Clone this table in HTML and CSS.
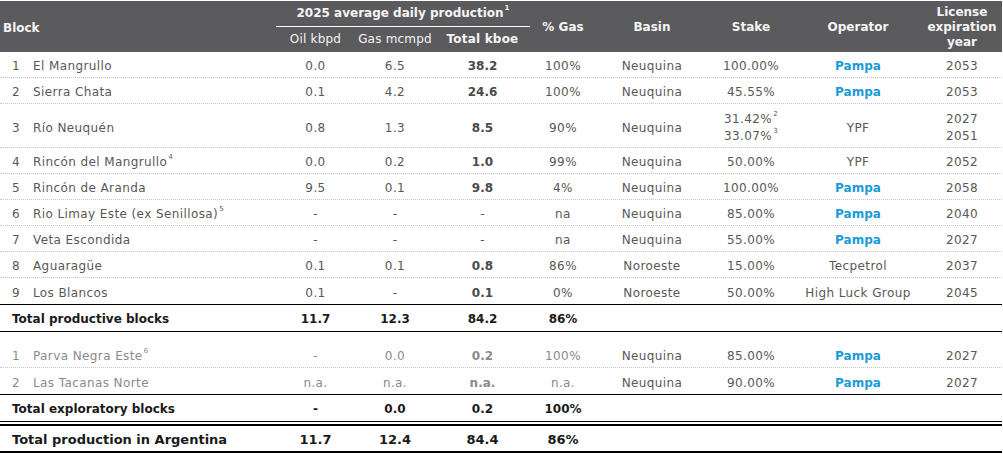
FILE: index.html
```html
<!DOCTYPE html>
<html>
<head>
<meta charset="utf-8">
<link rel="stylesheet" href="styles.css">
</head>
<body>
<div class="table">
  <div class="head">
    <div class="h-block">Block</div>
    <div class="h-group">2025 average daily production<sup>1</sup></div>
    <div class="h-sub c2">Oil kbpd</div>
    <div class="h-sub c3">Gas mcmpd</div>
    <div class="h-sub c4 b">Total kboe</div>
    <div class="h-col">% Gas</div>
    <div class="h-col">Basin</div>
    <div class="h-col">Stake</div>
    <div class="h-col">Operator</div>
    <div class="h-col">License<br>expiration<br>year</div>
  </div>

  <div class="row">
    <div class="name"><span class="num">1</span>El Mangrullo</div>
    <div>0.0</div><div>6.5</div><div class="b">38.2</div><div>100%</div>
    <div>Neuquina</div><div>100.00%</div><div class="pampa">Pampa</div><div>2053</div>
  </div>
  <div class="row">
    <div class="name"><span class="num">2</span>Sierra Chata</div>
    <div>0.1</div><div>4.2</div><div class="b">24.6</div><div>100%</div>
    <div>Neuquina</div><div>45.55%</div><div class="pampa">Pampa</div><div>2053</div>
  </div>
  <div class="row tall">
    <div class="name"><span class="num">3</span>Río Neuquén</div>
    <div>0.8</div><div>1.3</div><div class="b">8.5</div><div>90%</div>
    <div>Neuquina</div>
    <div class="two"><span>31.42%<sup>2</sup></span><span>33.07%<sup>3</sup></span></div>
    <div>YPF</div>
    <div class="two"><span>2027</span><span>2051</span></div>
  </div>
  <div class="row">
    <div class="name"><span class="num">4</span>Rincón del Mangrullo<sup>4</sup></div>
    <div>0.0</div><div>0.2</div><div class="b">1.0</div><div>99%</div>
    <div>Neuquina</div><div>50.00%</div><div>YPF</div><div>2052</div>
  </div>
  <div class="row">
    <div class="name"><span class="num">5</span>Rincón de Aranda</div>
    <div>9.5</div><div>0.1</div><div class="b">9.8</div><div>4%</div>
    <div>Neuquina</div><div>100.00%</div><div class="pampa">Pampa</div><div>2058</div>
  </div>
  <div class="row">
    <div class="name"><span class="num">6</span>Rio Limay Este (ex Senillosa)<sup>5</sup></div>
    <div>-</div><div>-</div><div>-</div><div>na</div>
    <div>Neuquina</div><div>85.00%</div><div class="pampa">Pampa</div><div>2040</div>
  </div>
  <div class="row">
    <div class="name"><span class="num">7</span>Veta Escondida</div>
    <div>-</div><div>-</div><div>-</div><div>na</div>
    <div>Neuquina</div><div>55.00%</div><div class="pampa">Pampa</div><div>2027</div>
  </div>
  <div class="row">
    <div class="name"><span class="num">8</span>Aguaragüe</div>
    <div>0.1</div><div>0.1</div><div class="b">0.8</div><div>86%</div>
    <div>Noroeste</div><div>15.00%</div><div>Tecpetrol</div><div>2037</div>
  </div>
  <div class="row last">
    <div class="name"><span class="num">9</span>Los Blancos</div>
    <div>0.1</div><div>-</div><div class="b">0.1</div><div>0%</div>
    <div>Noroeste</div><div>50.00%</div><div>High Luck Group</div><div>2045</div>
  </div>
  <div class="row total">
    <div class="name">Total productive blocks</div>
    <div>11.7</div><div>12.3</div><div>84.2</div><div>86%</div>
    <div></div><div></div><div></div><div></div>
  </div>

  <div class="spacer"></div>

  <div class="row explo">
    <div class="name"><span class="num">1</span>Parva Negra Este<sup>6</sup></div>
    <div>-</div><div>0.0</div><div class="b">0.2</div><div>100%</div>
    <div>Neuquina</div><div>85.00%</div><div class="pampa">Pampa</div><div>2027</div>
  </div>
  <div class="row explo last">
    <div class="name"><span class="num">2</span>Las Tacanas Norte</div>
    <div>n.a.</div><div>n.a.</div><div class="b">n.a.</div><div>n.a.</div>
    <div>Neuquina</div><div>90.00%</div><div class="pampa">Pampa</div><div>2027</div>
  </div>
  <div class="row total">
    <div class="name">Total exploratory blocks</div>
    <div>-</div><div>0.0</div><div>0.2</div><div>100%</div>
    <div></div><div></div><div></div><div></div>
  </div>
  <div class="row grand">
    <div class="name">Total production in Argentina</div>
    <div>11.7</div><div>12.4</div><div>84.4</div><div>86%</div>
    <div></div><div></div><div></div><div></div>
  </div>
</div>
</body>
</html>
```

FILE: styles.css
```css
html, body {
  margin: 0;
  padding: 0;
  background: #ffffff;
}

body {
  font-family: "DejaVu Sans", Verdana, sans-serif;
  font-size: 12px;
  color: #585858;
}

.table {
  width: 1002px;
  padding-top: 1px;
}

.head,
.row {
  display: grid;
  grid-template-columns: 276px 79px 80px 95px 66px 112px 86px 128px 80px;
}

.head {
  grid-template-rows: 26px 25px;
  background: #5b5b5d;
  color: #f4f4f4;
}

.head > div {
  box-sizing: border-box;
}

.h-block {
  grid-column: 1;
  grid-row: 1 / 3;
  align-self: center;
  padding-left: 3px;
  padding-top: 2px;
  font-weight: bold;
}

.h-group {
  grid-column: 2 / 5;
  grid-row: 1;
  border-bottom: 1px solid #ffffff;
  text-align: center;
  font-weight: bold;
  line-height: 25px;
}

.h-sub {
  grid-row: 2;
  text-align: center;
  line-height: 25px;
  letter-spacing: 0.2px;
}

.h-sub.c2 { grid-column: 2; }
.h-sub.c3 { grid-column: 3; }
.h-sub.c4 { grid-column: 4; }

.h-col {
  grid-row: 1 / 3;
  display: flex;
  align-items: center;
  justify-content: center;
  text-align: center;
  font-weight: bold;
  line-height: 15px;
  padding-top: 2px;
}

.b {
  font-weight: bold;
}

sup {
  font-size: 7px;
  line-height: 0;
  vertical-align: 7px;
  margin-left: 1px;
}

.row {
  box-sizing: border-box;
  height: 26px;
  padding-top: 3px;
  align-items: center;
  border-bottom: 1px dotted #c6c6c6;
  letter-spacing: 0.4px;
}

.row > div {
  text-align: center;
  white-space: nowrap;
}

.row > .name {
  text-align: left;
  padding-left: 12px;
}

.num {
  display: inline-block;
  width: 21px;
}

.row .b {
  color: #4a4a4a;
  letter-spacing: 0;
}

.pampa {
  color: #1b9bd7;
  font-weight: bold;
  letter-spacing: 0;
}

.row.tall {
  height: 44px;
  padding-top: 4px;
}

.two {
  display: flex;
  flex-direction: column;
  align-items: center;
  line-height: 17px;
}

.row.last {
  border-bottom: 1px solid #000000;
  height: 27px;
}

.row.total {
  height: 27px;
  padding-top: 2px;
  border-bottom: 1px solid #000000;
  font-weight: bold;
  color: #1a1a1a;
  letter-spacing: 0;
}

.spacer {
  height: 10px;
}

.row.explo > div:nth-child(-n+5) {
  color: #8a8a8a;
}

.row.explo > .b {
  color: #7a7a7a;
}

.row.grand {
  margin-top: 2px;
  height: 29px;
  padding-top: 1px;
  border-top: 2px solid #000000;
  border-bottom: 2px solid #000000;
  font-weight: bold;
  font-size: 13px;
  color: #1a1a1a;
  letter-spacing: 0;
}
```
